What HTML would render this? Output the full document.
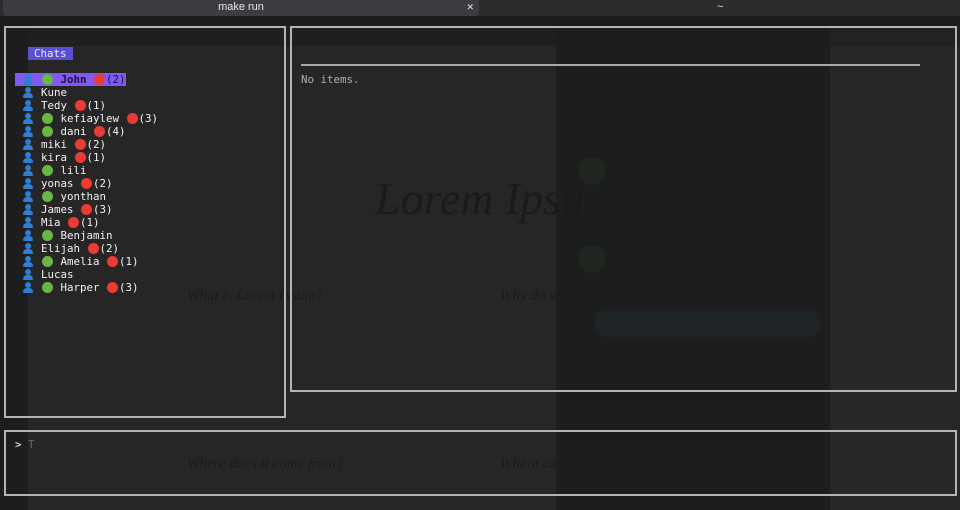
<!DOCTYPE html>
<html><head><meta charset="utf-8"><style>
*{margin:0;padding:0;box-sizing:border-box}
html,body{width:960px;height:510px;overflow:hidden;background:#222224;font-family:"DejaVu Sans Mono","Liberation Mono",monospace;}
.abs{position:absolute}
.bar{left:0;top:0;width:960px;height:16px;background:#2c2b2e}
.tab{left:3px;top:0;width:476px;height:16px;background:#3d3c40;border-radius:0 0 4px 4px;color:#e8e8e8;font:11px "Liberation Sans",sans-serif;text-align:center;line-height:15px}
.box{border:2px solid #b4b4b4}
.mono{font-size:10.8px;line-height:13px;color:#f2f2f2;white-space:pre}
.list{white-space:normal}
.ic{display:inline-block;width:13px;height:13px;vertical-align:top;position:relative}
.p::before{content:"";position:absolute;left:3px;top:1px;width:6px;height:6px;border-radius:50%;background:#2b7fd6}
.p::after{content:"";position:absolute;left:1px;top:7px;width:10px;height:5px;border-radius:4px 4px 1px 1px;background:#2b7fd6}
.g::before{content:"";position:absolute;left:1px;top:1px;width:11px;height:11px;border-radius:50%;background:#6bb545}
.r::before{content:"";position:absolute;left:1px;top:1px;width:11px;height:11px;border-radius:50%;background:#ec3b35}
.sp{display:inline-block;width:6.5px}
.row{height:13px;white-space:pre}
</style></head><body>
<div class="abs bar"></div>
<div class="abs tab">make run<span style="position:absolute;right:5px;top:0;font-size:9px">✕</span></div>
<div class="abs" style="left:717px;top:0;color:#ddd;font:11px 'Liberation Sans',sans-serif;line-height:15px">~</div>
<div class="abs" style="left:0;top:16px;width:960px;height:10px;background:#1c1c1e"></div>
<div class="abs" style="left:0;top:26px;width:28px;height:484px;background:#1d1d1f"></div>
<div class="abs" style="left:28px;top:26px;width:528px;height:20px;background:#1f1f21"></div>
<div class="abs" style="left:28px;top:46px;width:528px;height:464px;background:#262627"></div>
<div class="abs" style="left:556px;top:26px;width:274px;height:484px;background:#1d1d1e"></div>
<div class="abs" style="left:830px;top:46px;width:130px;height:464px;background:#272727"></div>
<div class="abs" style="left:375px;top:172px;font:italic 46px 'Liberation Serif',serif;color:#1a1a1a">Lorem Ipsu</div>
<div class="abs" style="left:187px;top:288px;font:italic 15px 'Liberation Serif',serif;color:#1a1a1a">What is Lorem Ipsum?</div>
<div class="abs" style="left:187px;top:456px;font:italic 15px 'Liberation Serif',serif;color:#1a1a1a">Where does it come from?</div>
<div class="abs" style="left:500px;top:456px;font:italic 15px 'Liberation Serif',serif;color:#1a1a1a">Where ca</div>
<div class="abs" style="left:500px;top:288px;font:italic 15px 'Liberation Serif',serif;color:#1a1a1a">Why do w</div>
<div class="abs" style="left:578px;top:157px;width:28px;height:28px;border-radius:50%;background:#1f261f"></div>
<div class="abs" style="left:578px;top:245px;width:28px;height:28px;border-radius:50%;background:#1f261f"></div>
<div class="abs" style="left:595px;top:309px;width:225px;height:28px;border-radius:10px;background:#1e2426"></div>

<div class="abs box" style="left:4px;top:26px;width:282px;height:392px"></div>
<div class="abs mono" style="left:28px;top:47px;width:45px;height:13px;background:#5b4fd6;color:#eee;padding-left:6px">Chats</div>
<div class="abs" style="left:15px;top:73px;width:111px;height:13px;background:#7f5af0"></div>
<div class="abs mono list" style="left:15px;top:73px"><div class="row"><span class="sp"></span><span class="ic p"></span><span class="sp"></span><span class="ic g"></span><span class="sp"></span><b style="color:#1a1040">John</b><span class="sp"></span><span class="ic r"></span><span style="color:#1a1040">(2)</span></div><div class="row"><span class="sp"></span><span class="ic p"></span><span class="sp"></span>Kune</div><div class="row"><span class="sp"></span><span class="ic p"></span><span class="sp"></span>Tedy <span class="ic r"></span>(1)</div><div class="row"><span class="sp"></span><span class="ic p"></span><span class="sp"></span><span class="ic g"></span> kefiaylew <span class="ic r"></span>(3)</div><div class="row"><span class="sp"></span><span class="ic p"></span><span class="sp"></span><span class="ic g"></span> dani <span class="ic r"></span>(4)</div><div class="row"><span class="sp"></span><span class="ic p"></span><span class="sp"></span>miki <span class="ic r"></span>(2)</div><div class="row"><span class="sp"></span><span class="ic p"></span><span class="sp"></span>kira <span class="ic r"></span>(1)</div><div class="row"><span class="sp"></span><span class="ic p"></span><span class="sp"></span><span class="ic g"></span> lili</div><div class="row"><span class="sp"></span><span class="ic p"></span><span class="sp"></span>yonas <span class="ic r"></span>(2)</div><div class="row"><span class="sp"></span><span class="ic p"></span><span class="sp"></span><span class="ic g"></span> yonthan</div><div class="row"><span class="sp"></span><span class="ic p"></span><span class="sp"></span>James <span class="ic r"></span>(3)</div><div class="row"><span class="sp"></span><span class="ic p"></span><span class="sp"></span>Mia <span class="ic r"></span>(1)</div><div class="row"><span class="sp"></span><span class="ic p"></span><span class="sp"></span><span class="ic g"></span> Benjamin</div><div class="row"><span class="sp"></span><span class="ic p"></span><span class="sp"></span>Elijah <span class="ic r"></span>(2)</div><div class="row"><span class="sp"></span><span class="ic p"></span><span class="sp"></span><span class="ic g"></span> Amelia <span class="ic r"></span>(1)</div><div class="row"><span class="sp"></span><span class="ic p"></span><span class="sp"></span>Lucas</div><div class="row"><span class="sp"></span><span class="ic p"></span><span class="sp"></span><span class="ic g"></span> Harper <span class="ic r"></span>(3)</div></div>

<div class="abs box" style="left:290px;top:26px;width:667px;height:366px"></div>
<div class="abs" style="left:301px;top:64px;width:619px;height:2px;background:#a8a8a8"></div>
<div class="abs mono" style="left:301px;top:73px;color:#b0b0b0">No items.</div>

<div class="abs box" style="left:4px;top:430px;width:953px;height:66px"></div>
<div class="abs mono" style="left:15px;top:438px">&gt; <span style="color:#666">T</span></div>
</body></html>
